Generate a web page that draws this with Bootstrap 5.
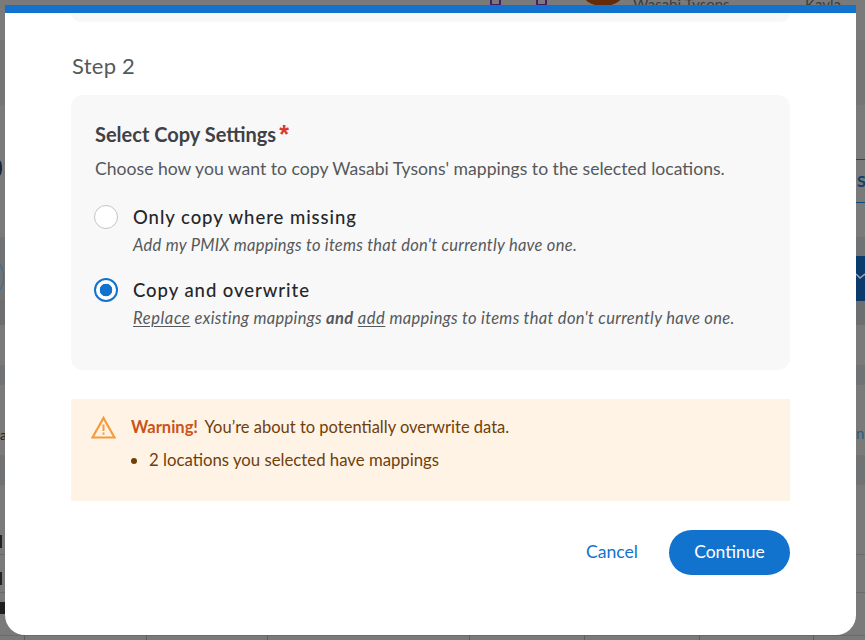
<!DOCTYPE html>
<html lang="en">
<head>
<meta charset="utf-8">
<title>Copy mappings</title>
<link href="https://cdn.jsdelivr.net/npm/bootstrap@5.3.0/dist/css/bootstrap.min.css" rel="stylesheet">
<style>
html,body{height:640px;overflow:hidden}
body{background:#7a7a7a;font-family:"Lato","Noto Sans",sans-serif;position:relative}
.bg-layer{position:absolute;inset:0;z-index:0;overflow:hidden}
.bg-bit{position:absolute}
.band{left:0;right:0;background:#717273}
.hline{left:0;right:0;height:1px;background:#6a6a6a}
.vtick{top:635px;width:1px;height:5px;background:#5e5e5e}
.bg-text{font-size:15px;line-height:18px;color:#3d3d3d;white-space:nowrap}
.dialog-shell{position:relative;z-index:1;margin:5px 0 0 5px;width:851px;height:630px;background:#fff;border-radius:0 0 20px 20px;border-top:8px solid #1173ce;overflow:hidden;padding:0 66px}
.prev-card{height:9px;background:#f8f8f8;border-radius:0 0 12px 12px}
.step-title{font-size:22px;line-height:30px;color:#55585c;font-weight:400;margin:29px 0 14px;letter-spacing:.25px;padding-left:1px}
.settings-box{background:#f8f8f8;border-radius:12px;height:275px;padding:26px 24px 0}
.settings-title{font-size:20px;line-height:26px;font-weight:700;color:#3f4144;margin:0 0 9px}
.req{color:#d83a32;font:700 25px/0 "Liberation Sans",sans-serif;margin-left:3px;vertical-align:-1px}
.settings-desc{font-size:17.6px;line-height:26px;color:#55585c;margin:0 0 21px}
.opt{display:flex;gap:15px;margin:0}
.opt+.opt{margin-top:20px}
.opt-input.form-check-input{width:24px;height:24px;margin:2px 0 0 -1px;flex:none;background-color:#fff;border:1px solid #c4c4c4;box-shadow:none}
.opt-input.form-check-input:checked{background-color:#fff;border:2px solid #1173ce;background-image:radial-gradient(circle,#1173ce 0,#1173ce 6px,transparent 6.6px)}
.opt-name{font-size:18.5px;line-height:28px;color:#25272a;font-weight:500;letter-spacing:.95px}
.opt-sub{font-size:16.5px;line-height:22px;font-style:italic;color:#55585c;margin-top:3px;letter-spacing:.27px}
.opt-sub-wide{letter-spacing:.31px}
.opt-sub u{text-underline-offset:2px;letter-spacing:.6px}
.warn-box{background:#fff3e6;height:102px;margin-top:29px;padding:17px 20px;display:flex;gap:15px}
.warn-icon{width:25px;height:23px;flex:none}
.warn-line{font-size:16.5px;line-height:22px;color:#6e3f0b}
.warn-line strong{color:#c9541a;margin-right:3px}
.warn-list{font-size:16.75px;line-height:22px;color:#6e3f0b;margin:11px 0 0;padding-left:18px}
.dialog-actions{display:flex;justify-content:flex-end;align-items:center;gap:31px;margin-top:29px}
.act-cancel.btn{color:#1173ce;font-size:17.6px;padding:0;border:0}
.act-go.btn{background:#1173ce;border:0;color:#fff;border-radius:23px;width:121px;height:45px;font-size:17.5px;padding:0}
</style>
</head>
<body>
<div class="bg-layer" aria-hidden="true">
  <div class="bg-bit band" style="top:40px;height:65px;background:#757575"></div>
  <div class="bg-bit band" style="top:237px;height:63px"></div>
  <div class="bg-bit band" style="top:300px;height:25px;background:#6c6e70"></div>
  <div class="bg-bit band" style="top:365px;height:20px"></div>
  <div class="bg-bit band" style="top:455px;height:30px"></div>
  <div class="bg-bit hline" style="top:554px"></div>
  <div class="bg-bit hline" style="top:592px"></div>
  <div class="bg-bit hline" style="top:635px"></div>
  <div class="bg-bit" style="left:490px;top:-6px;width:11px;height:12px;border:2px solid #4a1a66;border-radius:2px"></div>
  <div class="bg-bit" style="left:536px;top:-6px;width:11px;height:12px;border:2px solid #4a1a66;border-radius:2px"></div>
  <div class="bg-bit" style="left:582px;top:-22px;width:42px;height:28px;background:#652b09;border-radius:50%"></div>
  <div class="bg-bit bg-text" style="left:633px;top:-5px">Wasabi Tysons</div>
  <div class="bg-bit bg-text" style="left:805px;top:-5px">Kayla</div>
  <div class="bg-bit" style="left:-4px;top:160px;width:6px;height:16px;background:#17263c;border-radius:50%"></div>
  <div class="bg-bit" style="left:-18px;top:260px;width:22px;height:34px;border:1px solid #3d6a92;border-radius:50%"></div>
  <div class="bg-bit" style="left:0;top:535px;width:2px;height:13px;background:#222"></div>
  <div class="bg-bit" style="left:0;top:572px;width:2px;height:13px;background:#222"></div>
  <div class="bg-bit" style="left:0;top:602px;width:5px;height:12px;background:#1e1e1e"></div>
  <div class="bg-bit" style="left:0;top:426px;color:#222;font-size:14px;line-height:18px;width:5px;overflow:hidden">a</div>
  <div class="bg-bit" style="left:856px;top:159px;width:9px;height:44px;border-top:1px solid #0b4a80;border-bottom:1px solid #0b4a80;color:#0b3f6f;font-weight:700;font-size:16px;line-height:42px;overflow:hidden;padding-left:1px">S</div>
  <div class="bg-bit" style="left:856px;top:256px;width:9px;height:45px;background:#0b3b6c"></div>
  <svg class="bg-bit" style="left:856px;top:272px" width="9" height="12" viewBox="0 0 9 12" fill="none"><path d="M0 2 L4 6 L9 2" stroke="#9aa6b2" stroke-width="1.5"/></svg>
  <div class="bg-bit" style="left:856px;top:424px;color:#2b5a80;font-size:15px;line-height:18px;width:9px;overflow:hidden">n</div>
  <div class="bg-bit vtick" style="left:24px"></div><div class="bg-bit vtick" style="left:146px"></div><div class="bg-bit vtick" style="left:267px"></div><div class="bg-bit vtick" style="left:469px"></div><div class="bg-bit vtick" style="left:584px"></div><div class="bg-bit vtick" style="left:699px"></div><div class="bg-bit vtick" style="left:813px"></div>
</div>

<div class="dialog-shell" role="dialog">
  <div class="prev-card"></div>
  <h2 class="step-title">Step 2</h2>
  <div class="settings-box">
    <h3 class="settings-title">Select Copy Settings<span class="req">*</span></h3>
    <p class="settings-desc">Choose how you want to copy Wasabi Tysons' mappings to the selected locations.</p>
    <label class="opt">
      <input class="form-check-input opt-input" type="radio" name="mode">
      <span>
        <span class="d-block opt-name">Only copy where missing</span>
        <span class="d-block opt-sub">Add my PMIX mappings to items that don't currently have one.</span>
      </span>
    </label>
    <label class="opt">
      <input class="form-check-input opt-input" type="radio" name="mode" checked>
      <span>
        <span class="d-block opt-name">Copy and overwrite</span>
        <span class="d-block opt-sub opt-sub-wide"><u>Replace</u> existing mappings <b>and</b> <u>add</u> mappings to items that don't currently have one.</span>
      </span>
    </label>
  </div>
  <div class="warn-box">
    <svg class="warn-icon" viewBox="0 0 25 23" fill="none">
      <path d="M12.5 2 L23.5 21.5 H1.5 Z" stroke="#f79a3a" stroke-width="2.2" stroke-linejoin="miter"/>
      <path d="M12.5 8.5 V15" stroke="#f79a3a" stroke-width="2"/>
      <rect x="11.5" y="16.5" width="2" height="2.2" fill="#f79a3a"/>
    </svg>
    <div>
      <div class="warn-line"><strong>Warning!</strong> You’re about to potentially overwrite data.</div>
      <ul class="warn-list"><li>2 locations you selected have mappings</li></ul>
    </div>
  </div>
  <div class="dialog-actions">
    <button type="button" class="btn act-cancel">Cancel</button>
    <button type="button" class="btn act-go">Continue</button>
  </div>
</div>
<script src="https://cdn.jsdelivr.net/npm/bootstrap@5.3.0/dist/js/bootstrap.bundle.min.js"></script>
</body>
</html>
